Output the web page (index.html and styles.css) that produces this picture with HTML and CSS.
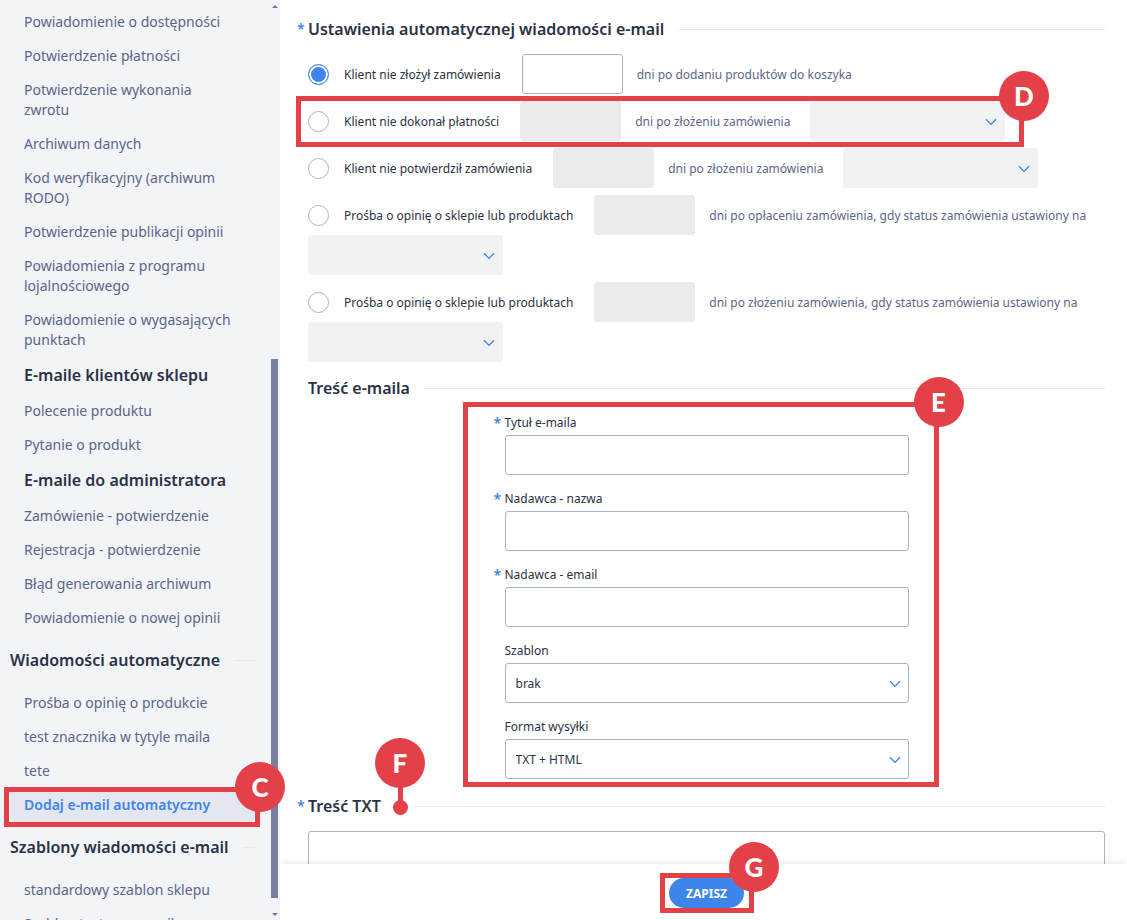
FILE: index.html
```
<!DOCTYPE html>
<html lang="pl">
<head>
  <meta charset="UTF-8" />
  <meta name="viewport" content="width=device-width, initial-scale=1.0" />
  <title>Dodaj e-mail automatyczny</title>
  <link rel="stylesheet" href="styles.css">
</head>
<body>
  <svg width="0" height="0" class="sprite">
    <symbol id="chevron" viewBox="0 0 12 8">
      <path d="M1 1.2 L6 6.4 L11 1.2" fill="none" stroke="currentColor" stroke-width="1.3" />
    </symbol>
  </svg>

  <aside class="sidebar">
    <div class="scroll">
      <span class="arrow up"></span>
      <span class="thumb"></span>
      <span class="arrow down"></span>
    </div>
    <nav>
      <ul>
        <li><a href="#">Powiadomienie o dostępności</a></li>
        <li><a href="#">Potwierdzenie płatności</a></li>
        <li><a href="#">Potwierdzenie wykonania<br>zwrotu</a></li>
        <li><a href="#">Archiwum danych</a></li>
        <li><a href="#">Kod weryfikacyjny (archiwum<br>RODO)</a></li>
        <li><a href="#">Potwierdzenie publikacji opinii</a></li>
        <li><a href="#">Powiadomienia z programu<br>lojalnościowego</a></li>
        <li><a href="#">Powiadomienie o wygasających<br>punktach</a></li>
      </ul>
      <h3>E-maile klientów sklepu</h3>
      <ul>
        <li><a href="#">Polecenie produktu</a></li>
        <li><a href="#">Pytanie o produkt</a></li>
      </ul>
      <h3>E-maile do administratora</h3>
      <ul>
        <li><a href="#">Zamówienie - potwierdzenie</a></li>
        <li><a href="#">Rejestracja - potwierdzenie</a></li>
        <li><a href="#">Błąd generowania archiwum</a></li>
        <li><a href="#">Powiadomienie o nowej opinii</a></li>
      </ul>
      <h2 class="nav-title">Wiadomości automatyczne</h2>
      <ul>
        <li><a href="#">Prośba o opinię o produkcie</a></li>
        <li><a href="#">test znacznika w tytyle maila</a></li>
        <li><a href="#">tete</a></li>
        <li class="current">
          <a href="#">Dodaj e-mail automatyczny</a>
          <div class="frame frame-c"><span class="badge">C</span></div>
        </li>
      </ul>
      <h2 class="nav-title">Szablony wiadomości e-mail</h2>
      <ul>
        <li><a href="#">standardowy szablon sklepu</a></li>
        <li><a href="#">Szablon testowy e-mail</a></li>
      </ul>
    </nav>
  </aside>

  <main>
    <form class="content" id="mailForm">
      <h2 class="title required">Ustawienia automatycznej wiadomości e-mail</h2>

      <div class="row">
        <input type="radio" name="typ" id="typ1" checked>
        <label for="typ1">Klient nie złożył zamówienia</label>
        <input type="text" class="days" id="dni1">
        <label class="after" for="dni1">dni po dodaniu produktów do koszyka</label>
      </div>
      <div class="row">
        <input type="radio" name="typ" id="typ2">
        <label for="typ2">Klient nie dokonał płatności</label>
        <input type="text" class="days" id="dni2" disabled>
        <label class="after" for="dni2">dni po złożeniu zamówienia</label>
        <span class="select"><select aria-label="Status" disabled></select><svg><use href="#chevron" /></svg></span>
        <div class="frame frame-d"><span class="badge">D</span></div>
      </div>
      <div class="row">
        <input type="radio" name="typ" id="typ3">
        <label for="typ3">Klient nie potwierdził zamówienia</label>
        <input type="text" class="days" id="dni3" disabled>
        <label class="after" for="dni3">dni po złożeniu zamówienia</label>
        <span class="select"><select aria-label="Status" disabled></select><svg><use href="#chevron" /></svg></span>
      </div>
      <div class="row">
        <input type="radio" name="typ" id="typ4">
        <label for="typ4">Prośba o opinię o sklepie lub produktach</label>
        <input type="text" class="days" id="dni4" disabled>
        <label class="after long" for="dni4">dni po opłaceniu zamówienia, gdy status zamówienia ustawiony na</label>
        <span class="select"><select aria-label="Status" disabled></select><svg><use href="#chevron" /></svg></span>
      </div>
      <div class="row">
        <input type="radio" name="typ" id="typ5">
        <label for="typ5">Prośba o opinię o sklepie lub produktach</label>
        <input type="text" class="days" id="dni5" disabled>
        <label class="after long" for="dni5">dni po złożeniu zamówienia, gdy status zamówienia ustawiony na</label>
        <span class="select"><select aria-label="Status" disabled></select><svg><use href="#chevron" /></svg></span>
      </div>

      <h2 class="title">Treść e-maila</h2>

      <div class="fields">
        <div class="field">
          <label class="required" for="tytul">Tytuł e-maila</label>
          <input type="text" id="tytul">
        </div>
        <div class="field">
          <label class="required" for="nazwa">Nadawca - nazwa</label>
          <input type="text" id="nazwa">
        </div>
        <div class="field">
          <label class="required" for="email">Nadawca - email</label>
          <input type="text" id="email">
        </div>
        <div class="field">
          <label for="szablon">Szablon</label>
          <span class="select"><select id="szablon"><option>brak</option></select><svg><use href="#chevron" /></svg></span>
        </div>
        <div class="field">
          <label for="format">Format wysyłki</label>
          <span class="select"><select id="format"><option>TXT + HTML</option></select><svg><use href="#chevron" /></svg></span>
        </div>
        <div class="frame frame-e"><span class="badge">E</span></div>
      </div>

      <h2 class="title required">
        <label for="txt">Treść TXT</label>
        <span class="pin"><span class="badge">F</span></span>
      </h2>
      <textarea id="txt"></textarea>
    </form>

    <footer>
      <div class="save">
        <button type="submit" form="mailForm">ZAPISZ</button>
        <div class="frame frame-g"><span class="badge">G</span></div>
      </div>
    </footer>
  </main>
</body>
</html>
```
FILE: styles.css
```
* { box-sizing: border-box; margin: 0; padding: 0; font-family: 'Noto Sans', 'Open Sans', sans-serif; }
body {
  display: flex;
  height: 100vh;
  overflow: hidden;
  background: #fff;
  color: #2b3245;
  font-size: 12px;
}
.sprite { position: absolute; }

/* sidebar */
.sidebar {
  position: relative;
  z-index: 1;
  flex: 0 0 280px;
  height: 100vh;
  padding: 5px 25px 0 10px;
  background: #f2f4f8;
}
.sidebar ul { list-style: none; }
.sidebar li { position: relative; }
.sidebar a {
  display: block;
  padding: 7px 0 7px 14px;
  border-radius: 6px;
  font-size: 14px;
  line-height: 20px;
  color: #5d6588;
  text-decoration: none;
  white-space: nowrap;
}
.sidebar .current a {
  background: #e4e7ef;
  color: #3d84eb;
  font-weight: 600;
}
.sidebar h3 {
  padding: 8px 0 9px 14px;
  font-size: 16px;
  line-height: 20px;
  font-weight: 600;
}
.nav-title {
  display: flex;
  align-items: center;
  padding: 15px 0 16px;
  font-size: 16px;
  line-height: 20px;
  font-weight: 600;
  white-space: nowrap;
}
.nav-title::after, .title::after {
  content: '';
  flex: 1;
  height: 1px;
  margin-left: 14px;
  background: #e9e9e9;
}
.scroll {
  position: absolute;
  top: 0;
  right: 2px;
  bottom: 0;
  width: 7px;
}
.thumb {
  position: absolute;
  top: 39%;
  bottom: 22px;
  width: 7px;
  background: #77819f;
}
.arrow {
  position: absolute;
  left: 1px;
  border: 3px solid transparent;
}
.up { top: 2px; border-bottom-color: #6b7493; }
.down { bottom: 1px; border-top-color: #6b7493; }

/* form */
main {
  flex: 1;
  min-width: 0;
  display: flex;
  flex-direction: column;
}
.content {
  flex: 1;
  min-height: 0;
  overflow: hidden;
  padding: 3px 22px 0 28px;
}
.title {
  position: relative;
  display: flex;
  align-items: center;
  margin: 14px 0 13px;
  font-size: 16px;
  line-height: 24px;
  font-weight: 600;
}
.required::before {
  content: '*';
  position: absolute;
  left: -11px;
  color: #3d84eb;
  font-size: 14px;
  font-weight: 600;
}
.row {
  position: relative;
  display: flex;
  flex-wrap: wrap;
  align-items: center;
  margin-bottom: 7px;
}
.row label { margin: 0 21px 0 15px; }
.row .after {
  margin: 0 20px 0 14px;
  color: #5d6588;
}
.row .long { margin-right: 0; }
input[type=radio] {
  appearance: none;
  width: 21px;
  height: 21px;
  border: 1px solid #a9b2cd;
  border-radius: 50%;
  background: #fff;
}
input[type=radio]:checked {
  border-color: #3d84eb;
  background: #3d84eb;
  box-shadow: inset 0 0 0 2px #fff;
}
input[type=text], select, textarea {
  display: block;
  width: 100%;
  height: 40px;
  padding: 0 10px;
  border: 1px solid #a9b2cd;
  border-radius: 3px;
  background: #fff;
  color: #2b3245;
  font-size: 12px;
}
select { appearance: none; }
input.days { width: 101px; }
input.days:disabled { border-color: #ebebeb; background: #ebebeb; }
select:disabled { border-color: #f2f2f2; background: #f2f2f2; opacity: 1; }
.select {
  position: relative;
  display: block;
}
.row .select { width: 195px; }
.select svg {
  position: absolute;
  right: 8px;
  top: 17px;
  width: 12px;
  height: 8px;
  color: #3d84eb;
}
.fields {
  position: relative;
  width: 404px;
  max-width: 100%;
  margin: 0 auto 15px;
}
.field {
  position: relative;
  margin-bottom: 14px;
}
.field label {
  display: block;
  margin-bottom: 3px;
  line-height: 19px;
}
textarea { height: 200px; resize: none; }

footer {
  position: relative;
  flex: 0 0 56px;
  display: flex;
  justify-content: center;
  padding: 14px 22px 0 28px;
  background: #fff;
  box-shadow: 0 -2px 6px rgba(0, 0, 0, 0.08);
}
.save {
  position: relative;
  height: 30px;
}
.save button {
  width: 75px;
  height: 30px;
  border: none;
  border-radius: 15px;
  background: #3d84eb;
  color: #fff;
  font-size: 12px;
  font-weight: 700;
}

/* red markers over the form */
.frame {
  position: absolute;
  border: 5px solid #e34047;
  pointer-events: none;
}
.frame-c { top: -1px; right: -5px; bottom: -5px; left: -6px; }
.frame-d { top: -5px; right: 81px; bottom: -6px; left: -12px; }
.frame-e { top: -11px; right: -30px; bottom: -8px; left: -42px; }
.frame-g { top: -5px; right: -10px; bottom: -5px; left: -9px; }
.badge {
  position: absolute;
  top: -30px;
  right: -30px;
  width: 50px;
  height: 50px;
  border-radius: 50%;
  background: #e34047;
  color: #fff;
  font-family: Lato, sans-serif;
  font-size: 26px;
  line-height: 50px;
  font-weight: 900;
  text-align: center;
}
.frame-g .badge { top: -36px; }
.pin {
  position: relative;
  width: 15px;
  height: 15px;
  margin: 2px -9px 0 12px;
  border-radius: 50%;
  background: #e34047;
}
.pin::before {
  content: '';
  position: absolute;
  bottom: 8px;
  left: 5px;
  width: 5px;
  height: 20px;
  background: #e34047;
}
.pin .badge { top: -62px; left: -18px; }
```
